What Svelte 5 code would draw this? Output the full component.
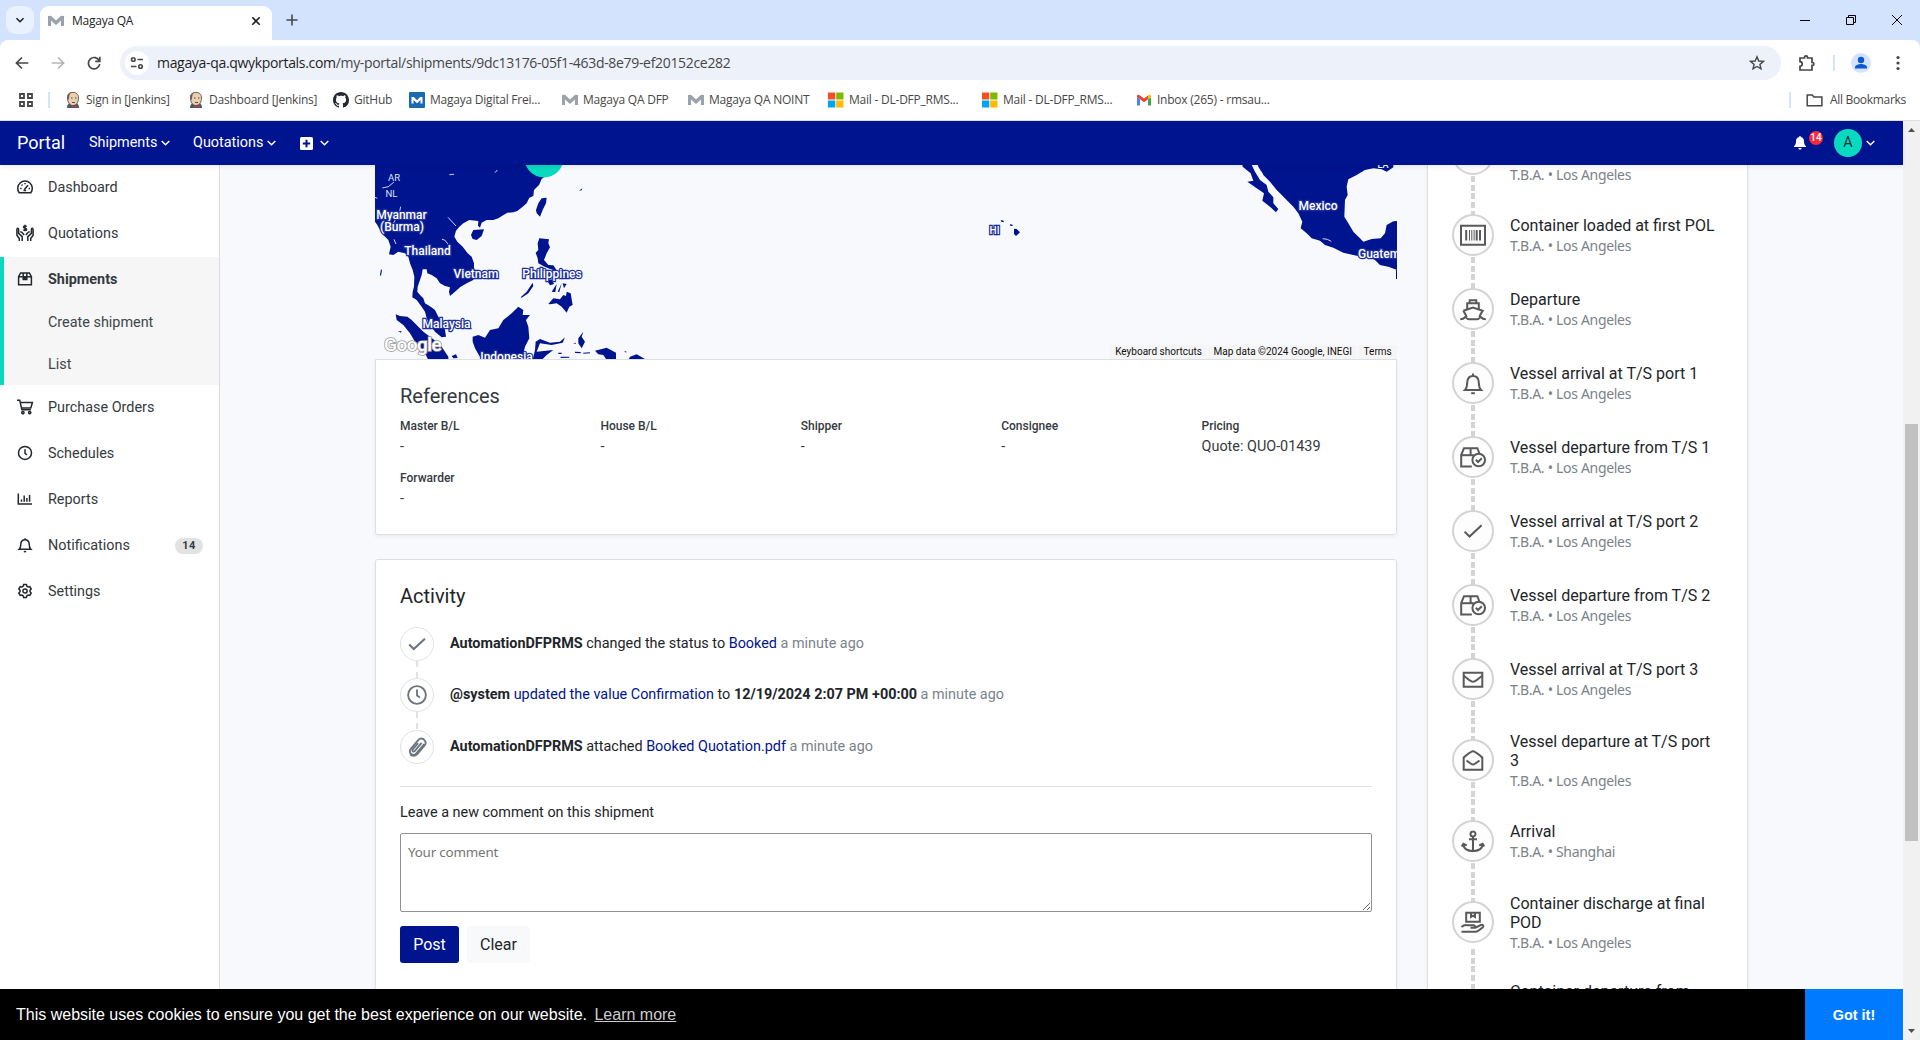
<script>
  const bookmarks = [
    { icon: 'jenkins', label: 'Sign in [Jenkins]', w: 123 },
    { icon: 'jenkins', label: 'Dashboard [Jenkins]', w: 145 },
    { icon: 'github', label: 'GitHub', w: 76 },
    { icon: 'mblue', label: 'Magaya Digital Frei...', w: 153 },
    { icon: 'mgray', label: 'Magaya QA DFP', w: 126 },
    { icon: 'mgray', label: 'Magaya QA NOINT', w: 140 },
    { icon: 'ms', label: 'Mail - DL-DFP_RMS...', w: 154 },
    { icon: 'ms', label: 'Mail - DL-DFP_RMS...', w: 154 },
    { icon: 'gmail', label: 'Inbox (265) - rmsau...', w: 150 },
  ];

  // Sidebar icons, 18 x 18 units
  const nav = [
    { label: 'Dashboard', d: ['M3.2 14.8A7.3 7.3 0 1 1 14.8 14.8Z', 'M8.2 11.8L12 7.2', 'M4.2 10.4h1.4M12.6 10.4H14M5.6 6.6l.9.9M9 5v1.3', 'M7.5 12.5h2.6'] },
    { label: 'Quotations', d: ['M.9 4.5v6.8l2.4 3.2V17M.9 4.5c1.6-.6 1.7.4 1.7 1.2v3.6l3.6 3.3V17M4.200 8.300c.6-.7 1.200-.4 1.600 0l2.400 2.800', 'M17.100 4.500v6.800l-2.400 3.200V17M17.100 4.500c-1.600-.6-1.700.4-1.700 1.200v3.600l-3.600 3.300V17M13.800 8.300c-.6-.7-1.200-.4-1.600 0l-2.400 2.800', 'M10.700 2.600c-.6-.8-3.200-.9-3.200.4 0 1.500 3.200.8 3.200 2.400 0 1.400-2.800 1.300-3.400.3M9 .8v6.400'] },
    { label: 'Shipments', active: true, d: ['M2.600 6.600L4.600 3h8.800l2 3.600v8.200H2.600Z', 'M2.600 6.800h12.800', 'M7.200 3v6.400h3.600V3', 'M8.400 7v2M9.600 7v2'] },
    { label: 'Purchase Orders', d: ['M1 2.200h2.700l2.200 9.600h9', 'M4.200 4.400h12.200l-1.600 5.600H5.500', 'M6.900 14.600m-1.100 0a1.100 1.100 0 1 0 2.200 0a1.100 1.100 0 1 0-2.200 0', 'M13.700 14.600m-1.100 0a1.100 1.100 0 1 0 2.200 0a1.100 1.100 0 1 0-2.200 0'] },
    { label: 'Schedules', d: ['M9 2.400A6.500 6.500 0 1 1 9 15.400A6.500 6.500 0 1 1 9 2.400', 'M9 5.200v4.200l2 1.400'] },
    { label: 'Reports', d: ['M2.300 3.500V14H16', 'M5.500 9.500v2.300M8.200 5.500v6.300M10.900 8v3.800M13.600 5v6.800'] },
    { label: 'Notifications', badge: '14', d: ['M3.200 13.200c1.700-1.600 1.400-3 1.600-5.300C5 5.300 6.800 3.700 9 3.700s4 1.600 4.200 4.200c.2 2.300-.1 3.700 1.600 5.300Z', 'M9 2.200v1.200', 'M7.800 15.600h2.400'] },
    { label: 'Settings', d: ['M7.600 2.600h2.800l.5 1.700 1.200.7 1.700-.4 1.400 2.400-1.200 1.300v1.400l1.200 1.300-1.400 2.400-1.700-.4-1.200.7-.5 1.700H7.600l-.5-1.700-1.200-.7-1.700.4-1.400-2.400L4 9.700V8.300L2.800 7l1.400-2.400 1.700.4 1.200-.7Z', 'M9 6.900a2.100 2.100 0 1 1 0 4.200a2.100 2.100 0 1 1 0-4.200'] },
  ];
  const sub = ['Create shipment', 'List'];

  const refs = [
    ['Master B/L', '-'], ['House B/L', '-'], ['Shipper', '-'], ['Consignee', '-'],
    ['Pricing', 'Quote: QUO-01439'], ['Forwarder', '-'],
  ];

  // Milestone icons, 26 x 26 units
  const art = {
    barcode: ['M1 3.800h24v19H1Z', 'M6.200 8v10.500', 'M16.700 8v10.500M20 8v10.500'],
    ship: ['M9.700 7V4.200h6.600V7', 'M7.200 13V7.300h11.600V13', 'M3.300 14.800L13 11.600l9.700 3.200c-1.200 2-2.700 4-3.300 6.200M3.300 14.800c1.200 2 2.700 4 3.300 6.200', 'M.2 23.300c2.600 0 3.600-.6 5.200-2.300 1.400 1.800 2.800 2.300 4 2.300h7.200c1.200 0 2.600-.5 4-2.300 1.600 1.700 2.600 2.300 5.200 2.300'],
    bell: ['M5 20c2.300-2.200 2-4.200 2.200-7.500C7.400 8.300 9.800 6 13 6s5.600 2.300 5.800 6.500c.2 3.300-.1 5.300 2.200 7.500Z', 'M13 3.600V6', 'M11.200 23.200h3.600'],
    boxcheck: ['M11.800 22.500H1.200V11L4 4.200h13.400L19.600 10', 'M1.200 11.200h12.600', 'M10.600 4.200v7', 'M18.700 9.700a6.300 6.300 0 1 1 0 12.600a6.300 6.300 0 1 1 0-12.600', 'M15.800 15.800l2.200 2.200 3.800-3.800'],
    check: ['M4.600 13.600l4.900 4.900L21.600 7.200'],
    mail: ['M3.700 6.700h18.600v14H3.700Z', 'M3.700 9.800c5 3.600 7 6 9.300 6s4.300-2.400 9.300-6'],
    open: ['M3.700 10.500C8 7 10.800 4.200 13 4.200s5 2.800 9.300 6.300v12.300H3.700Z', 'M6.500 13.500c3 2.200 4.700 4 6.500 4s3.500-1.800 6.500-4'],
    anchor: ['M13 3.400a2.500 2.500 0 1 1 0 5a2.500 2.500 0 1 1 0-5', 'M13 8.400V23M9 11.200h8', 'M3.300 16.500c.6 4.200 4.300 6.500 9.700 6.500s9.100-2.300 9.700-6.500', 'M1.800 18.600l1.600-2.800 3.400 1.600M24.200 18.600l-1.600-2.800-3.400 1.600'],
    hand: ['M6.200 3.700h13.600v9H6.200Z', 'M11 4v4l2-1.300L15 8V4', 'M1.500 18c2-1.800 4-2.200 5.800-1.800h6.500c1.800.3 1.500 2.200 0 2.500H10.500h4.800l5.600-2.700c2-.6 3.200.8 2 2.200l-5.300 4c-.6.4-1.100.6-2 .6H1.500'],
    clock: ['M13 2.500a10.500 10.500 0 1 1 0 21a10.500 10.500 0 1 1 0-21', 'M13 6.500V13.600l3.400 2.300'],
    clip: ['M21.600 9.500L12 20.800a4.200 4.200 0 0 1-6.500-5.400L14.600 4.500a5 5 0 0 1 7.600 6.400L13 21.800c-2.400 2.400-6 2-8-.2', 'M18.400 8.200l-8.200 9.600c-1.600 1.500-3.600-.4-2.300-2l6.400-7.500'],
  };

  const steps = [
    { icon: 'hand', title: 'Container gate in at first POL terminal', place: 'Los Angeles', two: true },
    { icon: 'barcode', title: 'Container loaded at first POL', place: 'Los Angeles' },
    { icon: 'ship', title: 'Departure', place: 'Los Angeles' },
    { icon: 'bell', title: 'Vessel arrival at T/S port 1', place: 'Los Angeles' },
    { icon: 'boxcheck', title: 'Vessel departure from T/S 1', place: 'Los Angeles' },
    { icon: 'check', title: 'Vessel arrival at T/S port 2', place: 'Los Angeles' },
    { icon: 'boxcheck', title: 'Vessel departure from T/S 2', place: 'Los Angeles' },
    { icon: 'mail', title: 'Vessel arrival at T/S port 3', place: 'Los Angeles' },
    { icon: 'open', title: 'Vessel departure at T/S port 3', place: 'Los Angeles', two: true },
    { icon: 'anchor', title: 'Arrival', place: 'Shanghai' },
    { icon: 'hand', title: 'Container discharge at final POD', place: 'Los Angeles', two: true, late: true },
    { icon: 'hand', title: 'Container departure from terminal', place: 'Los Angeles', two: true },
  ];
</script>

{#snippet chev()}
  <svg class="chev" width="9" height="6" viewBox="0 0 9 6"><path d="M.7.9L4.500 4.700 8.300.9" /></svg>
{/snippet}

{#snippet mark(kind)}
  {#if kind === 'jenkins'}
    <svg width="16" height="16" viewBox="0 0 16 16">
      <path d="M2 16c0-3 1-4 3-5l6 0c2 1 3 2 3 5Z" fill="#3d5a73" />
      <path d="M2.500 6C2.500 2 5 .4 8 .4S13.500 2 13.500 6c0 4-2 7.500-5.500 7.500S2.500 10 2.500 6Z" fill="#eacfae" stroke="#4a3f38" stroke-width=".8" />
      <path d="M2.300 7C1.600 3 3.500.6 6 .6 4 2.500 4.500 5 3.600 8Z" fill="#6b625b" />
      <path d="M6 6h1.500M10 6h1.500M7 10.500h3" stroke="#4a3f38" stroke-width=".9" />
      <path d="M6.500 13l2.500 1.200 2.800-1.200v3L9 14.800 6.500 16Z" fill="#d33833" />
    </svg>
  {:else if kind === 'github'}
    <svg width="16" height="16" viewBox="0 0 16 16"><path fill="#24292f" d="M8 0C3.580 0 0 3.580 0 8c0 3.540 2.290 6.530 5.470 7.590.4.070.55-.17.55-.38 0-.19-.01-.82-.01-1.490-2.010.37-2.530-.49-2.690-.94-.09-.23-.48-.94-.82-1.130-.28-.15-.68-.52-.01-.53.63-.01 1.080.58 1.230.82.72 1.210 1.870.87 2.330.66.07-.52.28-.87.51-1.070-1.780-.2-3.640-.89-3.640-3.950 0-.87.31-1.590.82-2.150-.08-.2-.36-1.020.08-2.120 0 0 .67-.21 2.200.82.64-.18 1.320-.27 2-.27s1.360.09 2 .27c1.530-1.040 2.200-.82 2.200-.82.44 1.100.16 1.920.08 2.120.51.56.82 1.270.82 2.150 0 3.070-1.870 3.750-3.650 3.950.29.25.54.73.54 1.480 0 1.070-.01 1.930-.01 2.200 0 .21.15.46.55.38A8.010 8.010 0 0 0 16 8c0-4.420-3.580-8-8-8Z" /></svg>
  {:else if kind === 'mblue'}
    <svg width="16" height="16" viewBox="0 0 16 16"><rect width="16" height="16" rx="1" fill="#1a6bb3" /><path d="M2.500 11.500V5h2.300L8 8.200 11.200 5h2.300v6.500h-2V8L8 11.300 4.500 8v3.500Z" fill="#fff" /></svg>
  {:else if kind === 'mgray'}
    <svg width="16" height="16" viewBox="0 0 16 16"><path d="M0 13V3l3-.2 5 4.600 5-4.600 3 .2v10h-3V7.500L8 12 3 7.500V13Z" fill="#9aa3ab" /></svg>
  {:else if kind === 'ms'}
    <svg width="16" height="16" viewBox="0 0 16 16"><path d="M0 .5h7.300v7H0Z" fill="#f25022" /><path d="M8.200.5h7.300v7H8.200Z" fill="#7fba00" /><path d="M0 8.500h7.300v7H0Z" fill="#00a4ef" /><path d="M8.200 8.500h7.300v7H8.200Z" fill="#ffb900" /></svg>
  {:else}
    <svg width="16" height="16" viewBox="0 0 16 16"><path d="M1 13.500V5l3 2.300v6.200Z" fill="#4285f4" /><path d="M12 13.500V7.300L15 5v8.500Z" fill="#34a853" /><path d="M1 3.500C1.500 2.500 3 2.600 4 3.400l4 3 4-3v3.900L8 10.300 1 5Z" fill="#ea4335" /><path d="M12 3.400c1.200-1 3-.6 3 1.100v.8l-3 2.200Z" fill="#fbbc04" /></svg>
  {/if}
{/snippet}

{#snippet glyph(name, size)}
  <svg width={size} height={size} viewBox="0 0 26 26" class="glyph">
    {#each art[name] as d}<path {d} />{/each}
    {#if name === 'barcode'}<path class="thin" d="M9.500 8v10.500M11.800 8v10.500M14.100 8v10.500" />{/if}
  </svg>
{/snippet}

<div class="window">
  <div class="tabs">
    <div class="tabsearch"><svg width="10" height="10" viewBox="0 0 10 10"><path d="M1.500 3.200L5 6.700 8.500 3.200" /></svg></div>
    <div class="tab">
      {@render mark('mgray')}
      <span class="tabname">Magaya QA</span>
      <svg width="10" height="10" viewBox="0 0 10 10"><path d="M1.300 1.300l7.400 7.400M8.700 1.300L1.300 8.700" /></svg>
    </div>
    <svg class="plus" width="12" height="12" viewBox="0 0 12 12"><path d="M6 .5v11M.5 6h11" /></svg>
    <div class="winctl">
      <svg width="12" height="12" viewBox="0 0 12 12"><path d="M1 6.500h10" /></svg>
      <svg width="12" height="12" viewBox="0 0 12 12"><path d="M1.500 3.500h7v7h-7ZM3.500 3.500v-2h7v7h-2" /></svg>
      <svg width="12" height="12" viewBox="0 0 12 12"><path d="M1 1l10 10M11 1L1 11" /></svg>
    </div>
  </div>

  <div class="toolbar">
    <svg class="tb" width="16" height="16" viewBox="0 0 16 16"><path d="M14.300 8H2.500M8 2.500L2.400 8 8 13.500" /></svg>
    <svg class="tb off" width="16" height="16" viewBox="0 0 16 16"><path d="M1.700 8h11.800M8 2.500L13.600 8 8 13.500" /></svg>
    <svg class="tb" width="16" height="16" viewBox="0 0 16 16"><path d="M13.300 6A5.700 5.700 0 1 0 13.700 9" /><path d="M13.800 1.800V6.400H9.200" /></svg>
    <div class="omni">
      <div class="site"><svg width="14" height="14" viewBox="0 0 14 14"><path d="M7.500 3.500H13M1 10.500h5.500" /><circle cx="3.300" cy="3.500" r="1.800" /><circle cx="10.500" cy="10.500" r="1.800" /></svg></div>
      <span class="url"><b>magaya-qa.qwykportals.com</b>/my-portal/shipments/9dc13176-05f1-463d-8e79-ef20152ce282</span>
      <svg class="tb" width="16" height="16" viewBox="0 0 16 16"><path stroke-width="1.400" d="M8 1.800l1.800 4.200 4.600.4-3.500 3 1.100 4.500L8 11.500l-4 2.400 1.100-4.500-3.500-3L6.200 6Z" /></svg>
    </div>
    <svg class="tb ext" width="18" height="18" viewBox="0 0 18 18"><path d="M2 4h4.500V3.300a1.500 1.500 0 0 1 3 0V4H14v4.500h.5a1.300 1.300 0 0 1 0 2.800H14V16H2v-3.700c3-.2 3-4.400 0-4.600Z" /></svg>
    <i class="sep"></i>
    <svg class="person" width="20" height="20" viewBox="0 0 20 20"><circle cx="10" cy="10" r="10" fill="#d3e3fd" /><circle cx="10" cy="7" r="3.200" fill="#0b57d0" /><path d="M4 15.500v-1.300c0-2.300 4-3.200 6-3.200s6 .9 6 3.200v1.300Z" fill="#0b57d0" /></svg>
    <svg class="dots" width="4" height="16" viewBox="0 0 4 16"><circle cx="2" cy="2.500" r="1.600" /><circle cx="2" cy="8" r="1.600" /><circle cx="2" cy="13.500" r="1.600" /></svg>
  </div>

  <div class="bookmarks">
    <svg class="apps" width="14" height="14" viewBox="0 0 14 14"><path d="M1 1h4v4H1ZM9 1h4v4H9ZM1 9h4v4H1ZM9 9h4v4H9Z" /></svg>
    <i class="sep"></i>
    <div class="marks">
      {#each bookmarks as b}
        <div class="bm" style:width="{b.w}px">{@render mark(b.icon)}<span>{b.label}</span></div>
      {/each}
    </div>
    <i class="sep"></i>
    <div class="bm all"><svg width="17" height="16" viewBox="0 0 17 16"><path d="M1.200 3h5l1.700 2h8v8.700H1.200Z" /></svg><span>All Bookmarks</span></div>
  </div>

  <div class="viewport">
    <div class="page">
      <header>
        <span class="brand">Portal</span>
        <span class="menu m1">Shipments {@render chev()}</span>
        <span class="menu m2">Quotations {@render chev()}</span>
        <svg width="13" height="13" viewBox="0 0 13 13"><rect width="13" height="13" rx="1.500" fill="#fff" /><path d="M6.500 2.800v7.400M2.800 6.500h7.400" stroke="#00148f" stroke-width="2" /></svg>
        <span class="menu m3">{@render chev()}</span>
        <div class="account">
          <svg width="12" height="14" viewBox="0 0 12 14"><path d="M6 0c.6 0 .9.400.9.900C9 1.400 10 3 10 5c0 3 .6 4 2 5.200V11H0v-.8C1.400 9 2 8 2 5c0-2 1-3.600 3.100-4.100C5.100.400 5.400 0 6 0ZM4.400 12h3.200c0 2-3.200 2-3.200 0Z" fill="#fff" /></svg>
          <span class="count">14</span>
          <span class="avatar">A</span>
          {@render chev()}
        </div>
      </header>

      <div class="body">
        <aside>
          {#each nav as n}
            <div class="group" class:active={n.active}>
              <div class="item">
                <svg width="18" height="18" viewBox="0 0 18 18">{#each n.d as d}<path {d} />{/each}</svg>
                <span>{n.label}</span>
                {#if n.badge}<em>{n.badge}</em>{/if}
              </div>
              {#if n.active}
                {#each sub as s}<div class="sub">{s}</div>{/each}
              {/if}
            </div>
          {/each}
        </aside>

        <main>
          <section class="center">
            <div class="map">
              <svg width="1022" height="194" viewBox="0 0 1022 194">
                <!-- East and Southeast Asia -->
                <g class="land" transform="translate(-5 -5) scale(.33333)">
                  <path d="M15 0H530V45L515 57 507 75 492 90 490 108 478 113 470 130 458 140 442 153 430 157 412 158 397 167 385 175 370 180 350 180 335 188 330 203 324 197 325 183 298 180 280 190 268 200 258 212 253 230 262 245 278 260 293 280 305 290 312 310 312 330 316 345 310 360 290 370 270 382 255 395 240 408 237 395 240 382 225 378 210 370 200 355 185 345 172 340 170 328 158 328 155 345 150 360 143 380 142 395 150 405 160 415 165 430 182 440 195 450 205 470 218 490 225 510 228 530 215 532 195 515 180 495 170 475 165 455 155 440 140 420 127 412 128 395 132 380 133 350 128 330 120 310 115 290 105 280 85 275 70 285 57 283 62 260 55 240 40 225 30 210 22 195 15 185Z" />
                  <path d="M303 225L310 210 342 208 335 228 320 240 308 237Z" />
                  <path d="M498 150L505 130 515 115 530 113 528 130 518 150 510 170 500 160Z" />
                  <path d="M508 235L537 238 535 250 540 262 530 280 522 300 535 315 550 316 562 334 540 327 524 320 505 310 503 295 497 278 505 270 503 250Z" />
                  <path d="M535 432L550 415 570 418 580 405 588 408 590 395 602 400 608 435 598 440 590 458 575 440 560 430 540 433Z" />
                  <path d="M452 412L470 395 488 368 490 378 475 400 455 413ZM530 360L545 358 552 372 540 376ZM545 395L560 372 556 396ZM563 395L575 370 568 396ZM578 370L590 372 582 385Z" />
                  <path d="M77 463L90 468 112 470 125 480 145 500 160 515 180 530 200 545 215 560 225 575 235 590 235 600 175 600 165 580 150 565 135 545 120 520 100 495 80 480Z" />
                  <path d="M308 530L325 525 345 533 360 510 385 505 400 480 425 460 445 440 460 450 458 465 480 465 468 480 475 500 478 535 465 560 455 600 335 600 315 565 308 545Z" />
                  <path d="M497 545L510 537 540 548 570 545 585 532 578 548 545 555 510 550 500 575 550 570 530 585 515 600 488 600 495 570Z" />
                  <path d="M625 535L640 515 635 530 645 545 635 565 625 550ZM675 572L710 563 738 578 738 600 710 600 700 585 685 583ZM780 590L800 583 830 600 775 600ZM30 345L33 328 36 330 33 348ZM627 92L637 85 635 91ZM84 513L95 514 93 518ZM572 590L598 590 598 593 572 594ZM615 575L632 576 632 580 615 579ZM245 588L258 583 263 594 250 595ZM640 578L660 577 660 580 640 581ZM762 572L770 575 768 578ZM610 550L618 548 616 552ZM565 578L575 578 575 582 565 582Z" />
                  <path class="river" d="M37 84L55 80 72 66M15 112L22 115M92 140L88 158 70 190M234 172L258 198M72 238L78 252M216 238L224 240 234 252M238 44L252 43M375 38L382 30" />
                </g>
                <!-- Hawaii and Central America -->
                <g class="land" transform="translate(585 -5) scale(.33333)">
                  <path d="M845 0H868L885 35 900 60 920 75 925 95 940 112 940 130 955 147 948 157 930 140 907 122 912 100 890 85 862 65 880 62 872 40 848 20Z" />
                  <path d="M890 0H1300V22L1280 35 1265 28 1240 25 1215 30 1190 45 1165 58 1160 80 1163 105 1155 120 1153 170 1165 190 1180 215 1200 235 1210 245 1235 237 1262 235 1275 220 1280 195 1300 184 1312 183V330L1285 320 1260 315 1245 300 1225 290 1190 287 1150 278 1120 263 1095 255 1080 242 1055 235 1040 220 1022 205 1027 185 1015 160 1000 140 985 125 960 100 950 90 930 65 910 45 895 20Z" />
                  <path d="M162 206L170 207 180 217 168 228 162 222ZM122 180L131 182 131 187 124 185ZM150 193L158 194 158 198 150 197ZM1308 330H1311V357H1308Z" />
                  <path class="river" d="M1088 236L1102 238 1114 244M903 34L908 44" />
                </g>
                <circle cx="169" cy="-7" r="19.500" fill="#08dac0" />
                <g class="minor"><text x="19" y="16">AR</text><text x="16.500" y="31.500">NL</text></g>
                <g class="names">
                  <text x="26.500" y="54">Myanmar</text>
                  <text x="27" y="66">(Burma)</text>
                  <text x="52.500" y="90">Thailand</text>
                  <text x="101" y="113">Vietnam</text>
                  <text x="177" y="113">Philippines</text>
                  <text x="71.500" y="163">Malaysia</text>
                  <text x="131.500" y="196">Indonesia</text>
                  <text x="943" y="45">Mexico</text>
                  <text class="left" x="983" y="93">Guatemala</text>
                  <text class="hi" x="619.500" y="68.500">HI</text>
                  <text class="la" x="1008" y="3">LA</text>
                </g>
                <text class="google" x="9" y="185.500">Google</text>
              </svg>
              <div class="legal"><span>Keyboard shortcuts</span><span>Map data ©2024 Google, INEGI</span><span>Terms</span></div>
            </div>

            <div class="card refs">
              <h2>References</h2>
              <dl>
                {#each refs as [k, v]}
                  <div><dt>{k}</dt><dd>{v}</dd></div>
                {/each}
              </dl>
            </div>

            <div class="card activity">
              <h2>Activity</h2>
              <ul>
                <li><span class="dot">{@render glyph('check', 24)}</span><p><b>AutomationDFPRMS</b> changed the status to <a href="#booked">Booked</a> <small>a minute ago</small></p></li>
                <li><span class="dot">{@render glyph('clock', 22)}</span><p><b>@system</b> <a href="#value">updated the value Confirmation</a> to <b>12/19/2024 2:07 PM +00:00</b> <small>a minute ago</small></p></li>
                <li><span class="dot">{@render glyph('clip', 22)}</span><p><b>AutomationDFPRMS</b> attached <a href="#pdf">Booked Quotation.pdf</a> <small>a minute ago</small></p></li>
              </ul>
              <hr />
              <label for="comment">Leave a new comment on this shipment</label>
              <textarea id="comment" placeholder="Your comment"></textarea>
              <div class="actions"><button class="post">Post</button><button>Clear</button></div>
            </div>
          </section>

          <section class="track">
            {#each steps as s}
              <div class="step" class:two={s.two} class:late={s.late}>
                <span class="ring">{@render glyph(s.icon, 26)}</span>
                <div class="info"><h3>{s.title}</h3><p>T.B.A. • {s.place}</p></div>
              </div>
            {/each}
          </section>
        </main>
      </div>

      <footer>
        <p>This website uses cookies to ensure you get the best experience on our website. <a href="#cookies">Learn more</a></p>
        <button>Got it!</button>
      </footer>
    </div>

    <div class="scroll">
      <svg width="7" height="4" viewBox="0 0 7 4"><path d="M0 4L3.500 0 7 4Z" /></svg>
      <div class="thumb"></div>
      <svg width="7" height="4" viewBox="0 0 7 4"><path d="M0 0L3.500 4 7 0Z" /></svg>
    </div>
  </div>
</div>

<style>
  :global(body) { margin: 0; overflow: hidden; }
  .window, .window * { box-sizing: border-box; }
  .window { width: 1920px; height: 1040px; display: flex; flex-direction: column; overflow: hidden; background: #d3e3fd; font-family: Roboto, sans-serif; color: #212529; }
  svg { flex: none; display: block; fill: none; }
  p, h2, h3, dl, dd, ul { margin: 0; padding: 0; font-weight: 400; }
  a { color: #00148f; text-decoration: none; }
  button { font: inherit; border: 0; padding: 0; }

  .tabs, .bookmarks, .toolbar { font-family: 'Open Sans', sans-serif; font-size: 12px; }
  .tabs { height: 40px; display: flex; align-items: center; flex: none; stroke: #1f1f1f; stroke-width: 1.6; }
  .tabs span { stroke: none; }
  .tabsearch { width: 28px; height: 28px; margin-left: 6px; border-radius: 9px; background: #e9f0fe; display: flex; align-items: center; justify-content: center; }
  .tab { align-self: flex-end; width: 232px; height: 34px; margin-left: 6px; border-radius: 9px 9px 0 0; background: #fff; display: flex; align-items: center; padding: 0 11px 5px 8px; }
  .tab > :global(svg:first-child) { stroke: none; }
  .tabname { flex: 1; margin-left: 8px; letter-spacing: -.25px; }
  .tabs .plus { margin-left: 14px; stroke: #474747; }
  .winctl { margin-left: auto; display: flex; gap: 34px; padding-right: 17px; stroke-width: 1; stroke: #000; }

  .toolbar { height: 40px; flex: none; display: flex; align-items: center; background: #fff; border-radius: 8px 8px 0 0; padding: 6px 20px 0 14px; }
  .tb { stroke: #474747; stroke-width: 1.7; margin-right: 20px; }
  .off { stroke: #b5b5b5; }
  .omni { flex: 1; height: 34px; border-radius: 17px; background: #edf1fa; display: flex; align-items: center; padding-left: 5px; margin-left: -2px; }
  .omni .tb { margin: 0 16px 0 auto; }
  .site { width: 24px; height: 24px; border-radius: 50%; background: #fff; display: flex; align-items: center; justify-content: center; stroke: #474747; stroke-width: 1.6; }
  .url { font-size: 14px; line-height: 18px; margin: -1px 0 0 8px; color: #474747; letter-spacing: -.32px; }
  .url b { font-weight: 400; color: #1f1f1f; }
  .toolbar .ext { margin: 0 17px; }
  .sep { width: 2px; height: 16px; background: #d3e3fd; }
  .person { margin: 0 25px 0 16px; }
  .dots { fill: #474747; }

  .bookmarks { height: 41px; flex: none; display: flex; align-items: center; background: #fff; border-bottom: 1px solid #dcdfe4; padding: 0 14px 0 19px; color: #474747; }
  .apps { stroke: #474747; stroke-width: 1.8; margin-right: 15px; }
  .marks { display: flex; flex: 1; margin-left: 15px; }
  .bm { display: flex; align-items: center; gap: 5px; white-space: nowrap; letter-spacing: -.23px; }
  .bm span { margin-top: -1px; }
  .all { margin-left: 15px; gap: 7px; letter-spacing: -.3px; }
  .all svg { stroke: #474747; stroke-width: 1.5; }

  .viewport { flex: 1; min-height: 0; display: flex; }
  .page { width: 1903px; display: flex; flex-direction: column; background: #f8f9fc; }
  header { height: 44px; flex: none; z-index: 3; position: relative; background: #00148f; color: #fff; display: flex; align-items: center; padding: 0 28px 0 17px; box-shadow: 0 2px 4px rgba(0, 0, 0, .08); }
  .brand { font-size: 18px; width: 72px; margin-top: -1px; }
  .menu { font-size: 14.4px; display: flex; align-items: center; gap: 4px; margin-top: -1px; }
  .m1 { width: 104px; }
  .m2 { width: 107px; }
  .m3 { margin-left: 7px; }
  .chev { stroke: currentColor; stroke-width: 1.4; }
  .account { margin-left: auto; display: flex; align-items: center; }
  .count { width: 14px; height: 14px; border-radius: 7px; background: #fa2a3c; font-size: 10px; font-weight: 500; line-height: 14px; text-align: center; margin: -11px 11px 0 3px; }
  .avatar { width: 28px; height: 28px; border-radius: 50%; background: #08dac0; color: #15333d; font-size: 14.4px; line-height: 27px; text-align: center; margin-right: 4px; }

  .body { flex: 1; min-height: 0; display: flex; overflow: hidden; }
  aside { width: 220px; flex: none; background: #fff; border-right: 1px solid #d9dce0; font-size: 14.4px; }
  .group.active { background: #f6f6f6; border-left: 4px solid #08dac0; height: 128px; }
  .item { height: 46px; display: flex; align-items: center; padding: 0 16px 2px; color: #343a40; }
  .item svg { stroke: #23282c; stroke-width: 1.5; }
  .item span { margin-left: 14px; }
  .active .item { padding-left: 12px; font-weight: 700; }
  .item em { margin-left: auto; width: 28px; height: 16px; border-radius: 8px; background: #e2e2e2; font: 700 11px/15px Roboto, sans-serif; letter-spacing: .5px; text-align: center; margin-top: 1px; }
  .sub { height: 42px; line-height: 39px; padding-left: 44px; color: #40464c; }

  main { display: flex; align-items: flex-start; padding-left: 155px; gap: 30px; }
  .center { width: 1022px; }
  .map { height: 194px; position: relative; background: #f8f9fc; }
  .map svg { overflow: hidden; }
  .land { fill: #00148f; }
  .river { fill: none; stroke: #f8f9fc; stroke-width: 2.5; }
  .names { font-size: 12px; font-weight: 500; fill: #fff; stroke: #1c2f9c; stroke-width: 2.5px; paint-order: stroke; text-anchor: middle; }
  .left { text-anchor: start; }
  .hi { font-size: 10px; }
  .la { font-size: 9px; stroke-width: 0; }
  .minor { font-size: 9.5px; fill: #dfe3f4; text-anchor: middle; }
  .google { font-size: 19px; font-weight: 500; fill: #fff; stroke: #999; stroke-width: 1.6px; paint-order: stroke; letter-spacing: -.5px; }
  .legal { position: absolute; right: 0; bottom: 0; display: flex; gap: 1px; font-size: 10px; line-height: 14px; color: #111; }
  .legal span { background: #f5f5f5; padding: 0 5.3px; }

  .card { background: #fff; border: 1px solid #dcdfe3; border-radius: 3px; box-shadow: 0 2px 4px rgba(0, 0, 0, .06); padding: 0 24px; }
  .card h2 { font-size: 20px; line-height: 24px; }
  .refs { height: 176px; border-radius: 0 0 3px 3px; padding-top: 24px; color: #343a40; }
  dl { display: grid; grid-template-columns: repeat(5, 200.4px); padding-top: 10px; }
  dl div { height: 51.5px; }
  dt { font-size: 12px; font-weight: 500; line-height: 17px; }
  dd { font-size: 14.4px; line-height: 20px; padding-top: 2px; }
  .activity { margin-top: 24px; height: 460px; padding-top: 24px; }
  ul { list-style: none; padding-top: 19px; height: 178px; }
  li { display: flex; align-items: center; height: 34px; margin-bottom: 17.3px; position: relative; font-size: 14.4px; }
  li p { margin-top: -1px; }
  li:not(:last-child)::after { content: ''; position: absolute; left: 16px; top: 34px; width: 2px; height: 17px; background: linear-gradient(#dee2e6 6px, transparent 6px 11px, #dee2e6 11px); }
  .dot { width: 34px; height: 34px; border: 1px solid #dee2e6; border-radius: 50%; display: flex; align-items: center; justify-content: center; margin-right: 16px; }
  .glyph { stroke: #6c757d; stroke-width: 2.2; }
  li b { font-weight: 700; }
  li small { font-size: 14.4px; color: #7a828a; }
  hr { margin: 0; border: 0; border-top: 1px solid #dee2e6; }
  label { display: block; font-size: 14.4px; line-height: 20px; margin-top: 16px; }
  textarea { display: block; width: 972px; height: 79px; margin-top: 10px; border: 1px solid #8f9296; border-radius: 2px; padding: 8px 7px; font: 13.4px/20px 'Noto Sans', sans-serif; letter-spacing: -.2px; }
  textarea::placeholder { color: #757575; }
  .actions { display: flex; gap: 8px; margin-top: 14px; }
  .actions button { height: 37px; width: 63px; border-radius: 3px; background: #f8f9fa; font-size: 16px; color: #212529; }
  .actions .post { width: 59px; background: #00148f; color: #fff; }

  .track { width: 321px; height: 1100px; background: #fff; border: 1px solid #dcdfe3; border-top: 0; box-shadow: 0 2px 4px rgba(0, 0, 0, .06); margin-top: -55px; padding-left: 24px; }
  .step { height: 74px; display: flex; align-items: center; position: relative; }
  .two { height: 88px; }
  .step::after { content: ''; position: absolute; left: 19px; top: calc(50% + 21.5px); width: 4px; height: 40px; background: repeating-linear-gradient(#d3d3d3 0 6px, transparent 6px 8.7px); }
  .late::after { top: calc(50% + 27px); }
  .ring { width: 42px; height: 42px; border: 2px solid #d3d3d3; border-radius: 50%; background: #fdfdfd; z-index: 1; display: flex; align-items: center; justify-content: center; }
  .ring :global(.glyph) { stroke: #58595b; stroke-width: 2; }
  .glyph .thin { stroke-width: 1; }
  .info { width: 206px; margin: 1px 0 0 16px; }
  .info h3 { font-size: 16px; line-height: 19px; }
  .info p { font: 14px/18px 'Noto Sans', sans-serif; color: #7a828a; margin-top: 2px; letter-spacing: -.3px; }

  footer { height: 51px; flex: none; background: #000; color: #fff; display: flex; align-items: center; font: 16px 'Liberation Sans', sans-serif; z-index: 2; }
  footer p { padding-left: 16px; }
  footer a { color: #ccc; text-decoration: underline; margin-left: 3px; }
  footer button { margin-left: auto; width: 98px; height: 51px; background: #007bff; color: #fff; font-size: 14.4px; font-weight: 700; }

  .scroll { width: 17px; background: #f1f1f1; display: flex; flex-direction: column; align-items: center; padding: 7px 0; }
  .scroll svg { fill: #505050; }
  .thumb { width: 13px; height: 417px; margin: 292px 0 auto; background: #c1c1c1; }
</style>
